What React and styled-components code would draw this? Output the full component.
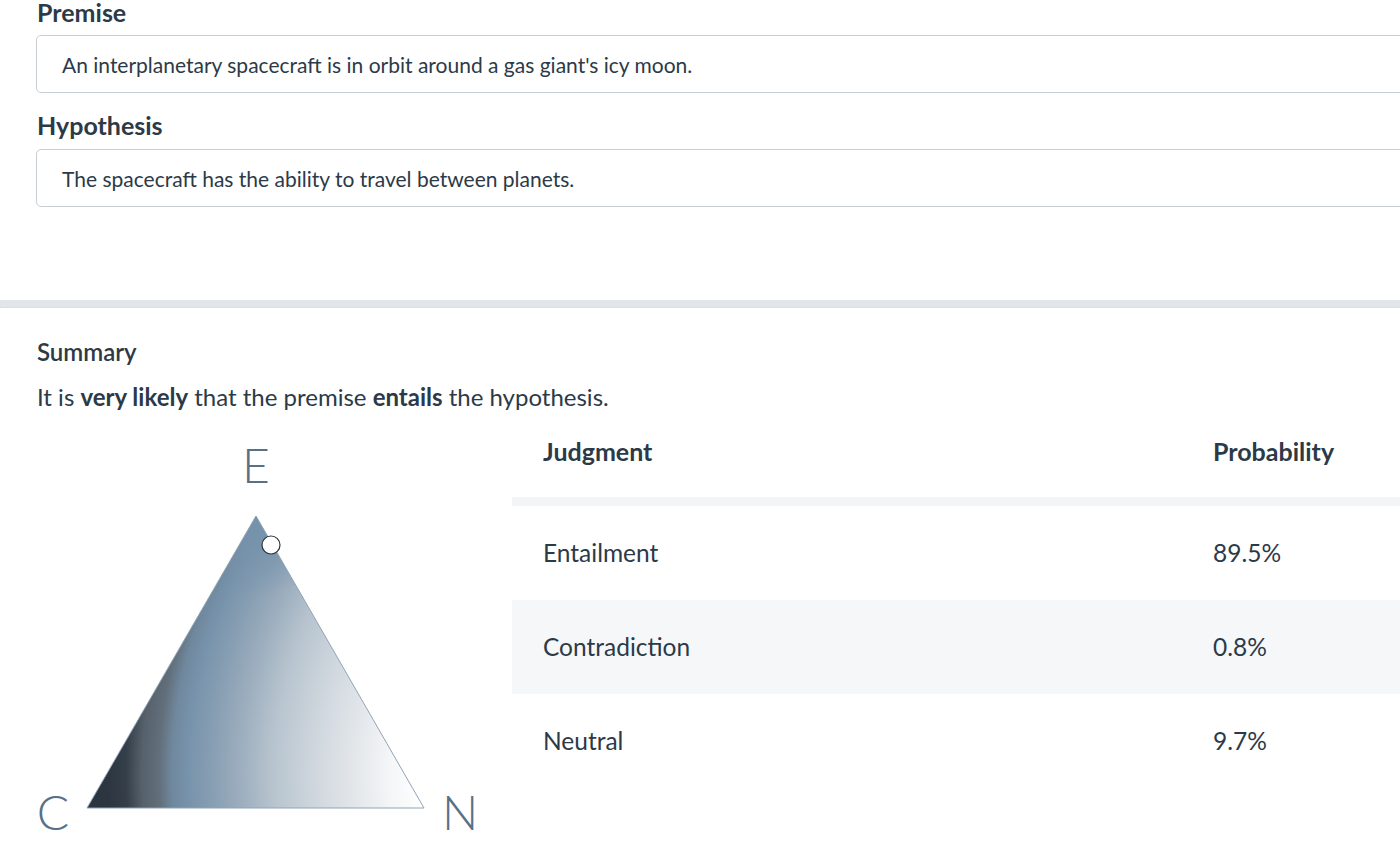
import React from 'react';
import styled, { createGlobalStyle } from 'styled-components';

const GlobalStyle = createGlobalStyle`
  body {
    margin: 0;
    background: #fff;
    font-family: Lato, "Open Sans", sans-serif;
    color: #2c3a48;
    overflow: hidden;
  }
`;

const Page = styled.div`
  width: 1440px;
`;

const InputSection = styled.div`
  padding-left: 36px;
  display: flex;
  flex-direction: column;
`;

const FieldLabel = styled.div`
  font-size: 25px;
  font-weight: 700;
  line-height: 24px;
  padding-left: 1px;
  margin-top: ${({ first }) => (first ? '0' : '20px')};
  margin-bottom: ${({ first }) => (first ? '11px' : '12px')};
`;

const TextBox = styled.div`
  box-sizing: border-box;
  height: 58px;
  border: 1px solid #c9ced3;
  border-radius: 5px;
  padding: 0 25px;
  display: flex;
  align-items: center;
  font-size: 21px;
  line-height: 1;
`;

// thick band between input and results
const Divider = styled.div`
  height: 7px;
  margin-top: 93px;
  background: #e2e6ea;
  border-bottom: 1px dotted #d3d9de;
`;

const SummarySection = styled.div`
  padding-left: 37px;
  padding-top: 32px;
`;

const SummaryTitle = styled.div`
  font-size: 24px;
  font-weight: 600;
  line-height: 24px;
`;

const SummaryText = styled.p`
  margin: 21px 0 0;
  font-size: 24px;
  line-height: 24px;

  b {
    font-weight: 700;
  }
`;

const Results = styled.div`
  display: grid;
  grid-template-columns: 476px 1fr;
  margin-top: 11px;
  padding-left: 36px;
`;

const ChartSvg = styled.svg`
  display: block;
`;

const Table = styled.table`
  border-collapse: collapse;
  width: 100%;
  font-size: 24.5px;
`;

const HeadCell = styled.th`
  text-align: left;
  font-weight: 700;
  font-size: 25px;
  height: 81px;
  padding: 0 0 15px 31px;
  box-sizing: border-box;
  border-bottom: 9px solid #f3f4f6;
  width: ${({ wide }) => (wide ? '670px' : 'auto')};
`;

const Row = styled.tr`
  background: ${({ shaded }) => (shaded ? '#f5f7f9' : '#fff')};
`;

const Cell = styled.td`
  height: 94px;
  padding: 0 0 0 31px;
  font-weight: 400;
`;

const rows = [
  { label: 'Entailment', value: '89.5%' },
  { label: 'Contradiction', value: '0.8%' },
  { label: 'Neutral', value: '9.7%' },
];

function TriangleChart() {
  return (
    <ChartSvg width="476" height="427" viewBox="0 0 476 427">
      <defs>
        <radialGradient id="base" gradientUnits="userSpaceOnUse" cx="584" cy="353" r="540">
          <stop offset="0.37" stopColor="#ffffff" />
          <stop offset="0.43" stopColor="#f3f5f7" />
          <stop offset="0.5" stopColor="#e1e5e9" />
          <stop offset="0.574" stopColor="#cdd5dc" />
          <stop offset="0.65" stopColor="#b5c2cd" />
          <stop offset="0.7" stopColor="#9eafbf" />
          <stop offset="0.75" stopColor="#8aa0b4" />
          <stop offset="0.8" stopColor="#7793ab" />
          <stop offset="0.83" stopColor="#6f889e" />
          <stop offset="0.855" stopColor="#626e79" />
          <stop offset="0.885" stopColor="#56616c" />
          <stop offset="0.915" stopColor="#353f4a" />
          <stop offset="0.95" stopColor="#2c3540" />
          <stop offset="1" stopColor="#2b3540" />
        </radialGradient>
        <radialGradient id="apex" gradientUnits="userSpaceOnUse" cx="220" cy="96" r="80">
          <stop offset="0" stopColor="#7793ab" stopOpacity="1" />
          <stop offset="0.4" stopColor="#7793ab" stopOpacity="0.7" />
          <stop offset="1" stopColor="#7793ab" stopOpacity="0" />
        </radialGradient>
      </defs>
      <polygon points="220,96 51,388 388,388" fill="url(#base)" />
      <polygon points="220,96 51,388 388,388" fill="url(#apex)" stroke="#8fa4b6" strokeWidth="1" />
      <circle cx="235" cy="125" r="9" fill="#fff" stroke="#2b3540" strokeWidth="1.2" />
      <g fontFamily="Lato, sans-serif" fontWeight="300" fontSize="48" fill="#587088" textAnchor="middle">
        <text x="220" y="63">E</text>
        <text x="17" y="410">C</text>
        <text x="424" y="410">N</text>
      </g>
    </ChartSvg>
  );
}

export default function App() {
  return (
    <Page>
      <GlobalStyle />
      <InputSection>
        <FieldLabel first>Premise</FieldLabel>
        <TextBox>An interplanetary spacecraft is in orbit around a gas giant's icy moon.</TextBox>
        <FieldLabel>Hypothesis</FieldLabel>
        <TextBox>The spacecraft has the ability to travel between planets.</TextBox>
      </InputSection>
      <Divider />
      <SummarySection>
        <SummaryTitle>Summary</SummaryTitle>
        <SummaryText>
          It is <b>very likely</b> that the premise <b>entails</b> the hypothesis.
        </SummaryText>
      </SummarySection>
      <Results>
        <TriangleChart />
        <div>
          <Table>
            <thead>
              <tr>
                <HeadCell wide>Judgment</HeadCell>
                <HeadCell>Probability</HeadCell>
              </tr>
            </thead>
            <tbody>
              {rows.map((r, i) => (
                <Row key={r.label} shaded={i === 1}>
                  <Cell>{r.label}</Cell>
                  <Cell>{r.value}</Cell>
                </Row>
              ))}
            </tbody>
          </Table>
        </div>
      </Results>
    </Page>
  );
}
